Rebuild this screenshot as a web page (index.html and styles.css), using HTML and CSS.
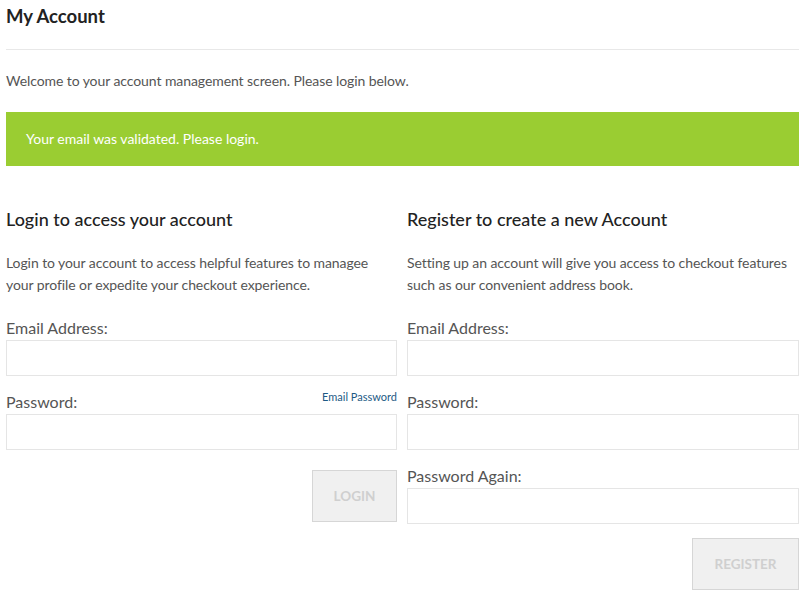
FILE: index.html
```html
<!DOCTYPE html>
<html lang="en">
<head>
    <meta charset="UTF-8">
    <title>My Account</title>
    <link rel="stylesheet" href="styles.css">
</head>
<body>
    <div class="page">
        <h1>My Account</h1>
        <hr class="rule">
        <p class="intro">Welcome to your account management screen. Please login below.</p>
        <div class="alert">Your email was validated. Please login.</div>

        <div class="columns">
            <div class="col">
                <h2>Login to access your account</h2>
                <p class="lead">Login to your account to access helpful features to managee your profile or expedite your checkout experience.</p>
                <label class="field-label" for="loginEmail">Email Address:</label>
                <input class="field" type="text" id="loginEmail">
                <div class="label-row">
                    <label class="field-label" for="loginPassword">Password:</label>
                    <a class="small-link" href="#">Email Password</a>
                </div>
                <input class="field" type="password" id="loginPassword">
                <div class="actions login-actions">
                    <button class="btn btn-login" type="button">LOGIN</button>
                </div>
            </div>
            <div class="col">
                <h2>Register to create a new Account</h2>
                <p class="lead">Setting up an account will give you access to checkout features such as our convenient address book.</p>
                <label class="field-label" for="regEmail">Email Address:</label>
                <input class="field" type="text" id="regEmail">
                <label class="field-label" for="regPassword">Password:</label>
                <input class="field" type="password" id="regPassword">
                <label class="field-label" for="regPassword2">Password Again:</label>
                <input class="field" type="password" id="regPassword2">
                <div class="actions register-actions">
                    <button class="btn btn-register" type="button">REGISTER</button>
                </div>
            </div>
        </div>
    </div>
</body>
</html>
```

FILE: styles.css
```css
body {
    margin: 0;
    font-family: Lato, "Open Sans", sans-serif;
    color: #555;
    background: #fff;
}
.page {
    padding: 0 10px 0 6px;
}
h1 {
    font-size: 18.5px;
    line-height: 22px;
    font-weight: bold;
    color: #222;
    margin: 5px 0 22px;
}
.rule {
    border: 0;
    border-top: 1px solid #e8e8e8;
    margin: 0;
}
.intro {
    font-size: 14px;
    line-height: 22px;
    letter-spacing: -0.08px;
    margin: 20px 0;
}
.alert {
    background-color: #9acd32;
    color: #fff;
    font-size: 14px;
    line-height: 22px;
    padding: 16px 20px;
}
.columns {
    display: grid;
    grid-template-columns: 391fr 392fr;
    gap: 10px;
    margin-top: 42px;
}
.col {
    display: flex;
    flex-direction: column;
}
h2 {
    font-size: 18px;
    line-height: 22px;
    font-weight: 500;
    color: #222;
    margin: 0 0 22px;
}
.lead {
    font-size: 14px;
    line-height: 22px;
    letter-spacing: -0.08px;
    margin: 0 0 22px;
}
.field-label {
    display: block;
    font-size: 16px;
    line-height: 20px;
    margin-bottom: 2px;
}
.label-row {
    display: flex;
    justify-content: space-between;
    align-items: flex-end;
}
.small-link {
    font-size: 11px;
    line-height: 10px;
    color: #1d5a85;
    text-decoration: none;
    margin-bottom: 12px;
}
.field {
    display: block;
    box-sizing: border-box;
    width: 100%;
    height: 36px;
    border: 1px solid #e5e5e5;
    margin: 0 0 16px;
    padding: 5px 8px;
    font-family: inherit;
}
.actions {
    display: flex;
    justify-content: flex-end;
}
.login-actions {
    margin-top: 4px;
}
.register-actions {
    margin-top: -2px;
}
.btn {
    height: 52px;
    padding: 0;
    background-color: #f0f0f0;
    border: 1px solid #d6d6d6;
    color: #cfcfcf;
    font-family: inherit;
    font-size: 13.5px;
    font-weight: bold;
    cursor: pointer;
}
.btn-login {
    width: 85px;
}
.btn-register {
    width: 107px;
}
```
